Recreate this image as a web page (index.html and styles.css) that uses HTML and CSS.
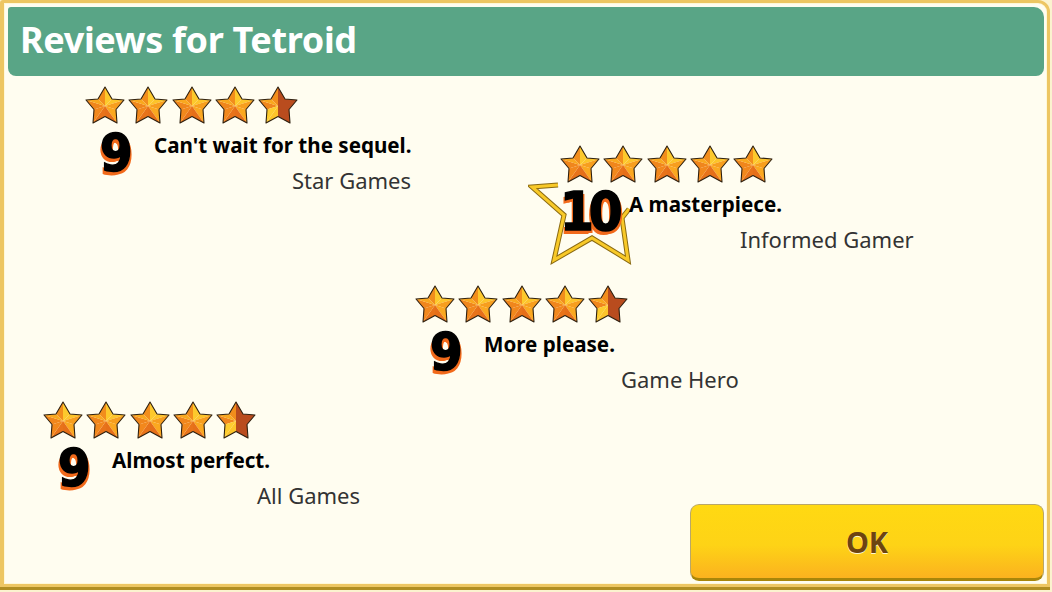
FILE: index.html
```html
<!DOCTYPE html>
<html lang="en">

<head>
    <meta charset="UTF-8">
    <meta name="viewport" content="width=device-width, initial-scale=1.0">
    <title>Reviews for Tetroid</title>
    <link rel="stylesheet" href="styles.css">
</head>

<body>

    <svg class="sprites" width="0" height="0">
        <symbol id="star-full" viewBox="0 0 40 38">
            <polygon points="20,1 20,20 13,13" fill="#f28e1c"/>
            <polygon points="20,1 27,13 20,20" fill="#fdc92c"/>
            <polygon points="39,14 27,13 20,20" fill="#fdc42a"/>
            <polygon points="39,14 20,20 31,23.5" fill="#f79e1e"/>
            <polygon points="32,37 31,23.5 20,20" fill="#fba820"/>
            <polygon points="32,37 20,20 20,30.5" fill="#e66f19"/>
            <polygon points="8,37 20,30.5 20,20" fill="#e8731a"/>
            <polygon points="8,37 20,20 9,23.5" fill="#f2881c"/>
            <polygon points="1,14 9,23.5 20,20" fill="#f0861c"/>
            <polygon points="1,14 20,20 13,13" fill="#f9a81f"/>
            <polygon points="20,1 27,13 39,14 31,23.5 32,37 20,30.5 8,37 9,23.5 1,14 13,13" fill="none" stroke="#2e2010" stroke-width="1.1" stroke-linejoin="round"/>
        </symbol>
        <symbol id="star-half" viewBox="0 0 40 38">
            <polygon points="20,1 20,20 13,13" fill="#f28e1c"/>
            <polygon points="1,14 9,23.5 20,20" fill="#f0861c"/>
            <polygon points="1,14 20,20 13,13" fill="#f9a81f"/>
            <polygon points="8,37 20,30.5 20,20" fill="#fcc42a"/>
            <polygon points="8,37 20,20 9,23.5" fill="#fdcc2e"/>
            <polygon points="20,1 27,13 39,14 31,23.5 32,37 20,30.5" fill="#b94c1e"/>
            <polygon points="20,1 27,13 39,14 31,23.5 32,37 20,30.5 8,37 9,23.5 1,14 13,13" fill="none" stroke="#2e2010" stroke-width="1.1" stroke-linejoin="round"/>
        </symbol>
    </svg>

    <div class="dialog">
        <header class="dialog-title">Reviews for Tetroid</header>

        <main class="reviews">
            <section class="review review-star-games">
                <div class="stars">
                    <svg class="star"><use href="#star-full"/></svg>
                    <svg class="star"><use href="#star-full"/></svg>
                    <svg class="star"><use href="#star-full"/></svg>
                    <svg class="star"><use href="#star-full"/></svg>
                    <svg class="star"><use href="#star-half"/></svg>
                </div>
                <div class="review-body">
                    <div class="score">9</div>
                    <div class="review-text">
                        <p class="quote">Can't wait for the sequel.</p>
                        <p class="source">Star Games</p>
                    </div>
                </div>
            </section>

            <section class="review review-informed">
                <div class="stars">
                    <svg class="star"><use href="#star-full"/></svg>
                    <svg class="star"><use href="#star-full"/></svg>
                    <svg class="star"><use href="#star-full"/></svg>
                    <svg class="star"><use href="#star-full"/></svg>
                    <svg class="star"><use href="#star-full"/></svg>
                </div>
                <svg class="big-star" width="110" height="90" viewBox="0 0 110 90">
                    <polyline class="big-star-edge" points="30,4 4,6 36,34 26,79 64,57 100,79 94,37 101,28"/>
                    <polyline class="big-star-fill" points="30,4 4,6 36,34 26,79 64,57 100,79 94,37 101,28"/>
                </svg>
                <div class="review-body">
                    <div class="score score-ten">10</div>
                    <div class="review-text">
                        <p class="quote">A masterpiece.</p>
                        <p class="source">Informed Gamer</p>
                    </div>
                </div>
            </section>

            <section class="review review-game-hero">
                <div class="stars">
                    <svg class="star"><use href="#star-full"/></svg>
                    <svg class="star"><use href="#star-full"/></svg>
                    <svg class="star"><use href="#star-full"/></svg>
                    <svg class="star"><use href="#star-full"/></svg>
                    <svg class="star"><use href="#star-half"/></svg>
                </div>
                <div class="review-body">
                    <div class="score">9</div>
                    <div class="review-text">
                        <p class="quote">More please.</p>
                        <p class="source">Game Hero</p>
                    </div>
                </div>
            </section>

            <section class="review review-all-games">
                <div class="stars">
                    <svg class="star"><use href="#star-full"/></svg>
                    <svg class="star"><use href="#star-full"/></svg>
                    <svg class="star"><use href="#star-full"/></svg>
                    <svg class="star"><use href="#star-full"/></svg>
                    <svg class="star"><use href="#star-half"/></svg>
                </div>
                <div class="review-body">
                    <div class="score">9</div>
                    <div class="review-text">
                        <p class="quote">Almost perfect.</p>
                        <p class="source">All Games</p>
                    </div>
                </div>
            </section>
        </main>

        <footer class="dialog-footer">
            <button class="ok-button">OK</button>
        </footer>
    </div>

</body>

</html>
```

FILE: styles.css
```css
* {
    margin: 0;
    padding: 0;
    box-sizing: border-box;
}

body {
    width: 1052px;
    height: 592px;
    overflow: hidden;
    background-color: #fbf3cf;
    font-family: "Noto Sans", "Open Sans", sans-serif;
}

.sprites {
    display: block;
    height: 0;
}

.dialog {
    display: flex;
    flex-direction: column;
    width: 1050px;
    height: 587px;
    padding: 4px 3px 3px 4px;
    border: 3px solid #edc662;
    border-left-width: 4px;
    border-radius: 3px 12px 0 0;
    box-shadow: inset 0 0 0 1px #fff8d8, 0 3px 0 #b08e22;
    background-color: #fffdf0;
}

.dialog-title {
    flex: none;
    height: 69px;
    padding-left: 12px;
    border-radius: 3px 10px 8px 8px;
    background-color: #59a586;
    color: #ffffff;
    font-size: 36px;
    font-weight: 700;
    letter-spacing: -0.35px;
    line-height: 65px;
}

.reviews {
    position: relative;
    flex: 1;
}

/* each review sits freely on the panel */
.review {
    position: absolute;
}

.review-star-games {
    left: 77px;
    top: 10px;
}

.review-informed {
    left: 552px;
    top: 69px;
}

.review-game-hero {
    left: 407px;
    top: 209px;
}

.review-all-games {
    left: 35px;
    top: 325px;
}

.stars {
    display: flex;
    gap: 3.3px;
}

.star {
    width: 40px;
    height: 38px;
}

.big-star {
    position: absolute;
    left: -32px;
    top: 36px;
}

.big-star polyline {
    fill: none;
    stroke-linejoin: miter;
}

.big-star-edge {
    stroke: #8a6a12;
    stroke-width: 5;
}

.big-star-fill {
    stroke: #f8c928;
    stroke-width: 3;
}

.review-body {
    position: relative;
    display: flex;
}

.score {
    width: 69px;
    padding-left: 15px;
    color: #000000;
    font-family: "DejaVu Sans", "Lato", sans-serif;
    font-size: 52px;
    font-stretch: condensed;
    font-weight: 700;
    line-height: 58px;
    -webkit-text-stroke: 1.5px #000000;
    text-shadow: -2px 4px 0 #f26a1b, 2px 3px 0 #f26a1b;
}

.score-ten {
    margin-left: -2px;
    width: 71px;
    padding-left: 2px;
    font-size: 54px;
    letter-spacing: -5px;
}

.review-text {
    padding-top: 8px;
}

.quote {
    color: #000000;
    font-size: 20.6px;
    font-weight: 700;
    line-height: 27px;
    white-space: nowrap;
}

.source {
    margin-top: 8px;
    color: #333333;
    font-size: 22px;
    line-height: 27px;
    white-space: nowrap;
}

.review-star-games .source {
    margin-left: 138px;
}

.review-informed .source {
    margin-left: 111px;
}

.review-game-hero .source {
    margin-left: 137px;
}

.review-all-games .source {
    margin-left: 145px;
}

.dialog-footer {
    flex: none;
    display: flex;
    justify-content: flex-end;
}

.ok-button {
    width: 354px;
    height: 77px;
    border: 1px solid #b9a768;
    border-bottom: 3px solid #a8860a;
    border-radius: 9px;
    background: linear-gradient(#ffd912 0%, #fed316 55%, #fbb21f 100%);
    color: #6d4410;
    font-family: "Noto Sans", sans-serif;
    font-size: 29px;
    font-weight: 700;
    text-shadow: 0 1px 0 #fff8d0;
}
```
